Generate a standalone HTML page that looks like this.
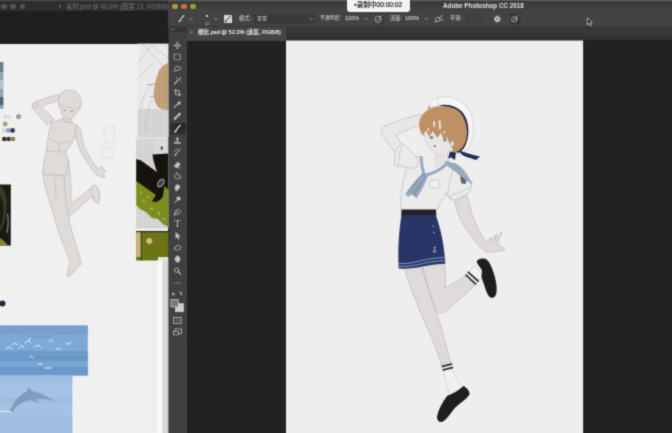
<!DOCTYPE html>
<html lang="zh-CN">
<head>
<meta charset="utf-8">
<title>Adobe Photoshop CC 2018</title>
<style>
html,body{margin:0;padding:0;}
body{width:672px;height:433px;overflow:hidden;position:relative;background:#222222;
  font-family:"Liberation Sans","Noto Sans CJK SC",sans-serif;}
#wrap{position:absolute;left:0;top:0;width:672px;height:433px;overflow:hidden;background:#222222;filter:url(#soft);}
#stage{position:absolute;left:0;top:0;width:672px;height:433px;}
.abs{position:absolute;}
.t{position:absolute;white-space:nowrap;line-height:1;will-change:transform;}
/* left window */
#lw{left:0;top:0;width:168px;height:433px;background:#f0f0f0;overflow:hidden;}
#lw-title{left:0;top:0;width:168px;height:11px;background:linear-gradient(#484848 0,#484848 0.7px,#2f2f2f 0.8px,#2d2d2d 11px);}
#lw-dark{left:0;top:11px;width:168px;height:33px;background:#1f1f1f;}
.dot{position:absolute;width:5px;height:5px;border-radius:50%;}
/* right window */
#rw-title{left:168px;top:0;width:504px;height:11px;background:linear-gradient(#5c5c5c 0,#5c5c5c 0.7px,#3c3c3c 0.8px,#3e3e3e 6px,#424242 11px);}
#rw-opt{left:168px;top:11px;width:504px;height:15px;background:#434343;}
#rw-tabs{left:168px;top:26px;width:504px;height:14px;background:linear-gradient(#393939 0,#363636 9px,#2c2c2c 14px);}
#rw-tab{left:187px;top:26.5px;width:99px;height:14px;background:#454545;}
#tools{left:168.5px;top:26.5px;width:18.5px;height:407px;background:#404040;}
#canvas{left:286px;top:40.5px;width:297px;height:393px;background:#eeeeee;}
#rec{left:347px;top:-3px;width:63px;height:14.5px;background:#f4f4f4;border-radius:3px;}
</style>
</head>
<body>
<svg width="0" height="0" style="position:absolute"><filter id="soft" x="0" y="0" width="100%" height="100%" color-interpolation-filters="sRGB"><feConvolveMatrix order="3" kernelMatrix="1 4 1 4 16 4 1 4 1" divisor="36" edgeMode="duplicate" preserveAlpha="true"/></filter></svg>
<div id="wrap"><div id="stage">
<!-- LEFT WINDOW -->
<div id="lw" class="abs">
  <div id="lw-title" class="abs"></div>
  <div id="lw-dark" class="abs"></div>
  <div class="dot" style="left:1.3px;top:4px;background:#565656;width:5.4px;height:5.4px"></div>
  <div class="dot" style="left:10.3px;top:4px;background:#565656;width:5.4px;height:5.4px"></div>
  <div class="dot" style="left:19.6px;top:4px;background:#565656;width:5.4px;height:5.4px"></div>
  <div class="abs" id="lw-icon" style="left:58.5px;top:4.5px;width:2.5px;height:3.5px;background:#5a5a5a;"></div>
  <div class="t" style="left:66px;top:3.6px;font-size:6.3px;color:#767676;">素材.psd @ 40.6% (图层 13, RGB/8)</div>
</div>

<!-- RIGHT WINDOW -->
<div id="rw-title" class="abs"></div>
<div id="rw-opt" class="abs"></div>
<div id="rw-tabs" class="abs"></div>
<div id="rw-tab" class="abs"></div>
<div id="tools" class="abs"></div>
<div class="abs" style="left:169px;top:26.5px;width:18px;height:5px;background:#353535;"></div>

<div class="dot" style="left:172.3px;top:4px;background:#b8973c;width:5.4px;height:5.4px"></div>
<div class="dot" style="left:181.3px;top:4px;background:#cc6e4c;width:5.4px;height:5.4px"></div>
<div class="dot" style="left:190.3px;top:4px;background:#8aab2e;width:5.4px;height:5.4px"></div>
<div class="t" style="left:443px;top:3px;font-size:6.3px;font-weight:bold;color:#e0e0e0;">Adobe Photoshop CC 2018</div>
<div class="t" style="left:198.3px;top:30.2px;font-size:5.6px;color:#eaeaea;-webkit-text-stroke:0.15px #eaeaea;">细化.psd @ 52.3% (选区, RGB/8)</div>
<div class="t" style="left:190px;top:30px;font-size:5px;color:#b0b0b0;">×</div>


<!-- OPTIONS BAR -->
<div class="abs" style="left:253.5px;top:14px;width:61.5px;height:9.5px;background:#3a3a3a;border-radius:1px;"></div>
<div class="abs" style="left:464.5px;top:14px;width:20px;height:9.5px;background:#404040;border-radius:1px;"></div>
<div class="abs" style="left:373.5px;top:13.5px;width:10px;height:10.5px;background:#383838;border-radius:1px;"></div>
<div class="abs" style="left:509.5px;top:13.5px;width:10.5px;height:10.5px;background:#333333;border-radius:1px;"></div>
<div class="abs" style="left:224px;top:14.5px;width:8px;height:8px;background:#d8d8d8;"></div>
<div class="t" style="left:238.5px;top:16px;font-size:5.3px;color:#dcdcdc;">模式:</div>
<div class="t" style="left:256.6px;top:16.1px;font-size:5.1px;color:#e4e4e4;">正常</div>
<div class="t" style="left:320px;top:16.2px;font-size:4.9px;color:#dcdcdc;">不透明度:</div>
<div class="t" style="left:344.6px;top:16.3px;font-size:5.6px;color:#e4e4e4;">100%</div>
<div class="t" style="left:389.8px;top:16px;font-size:5.3px;color:#dcdcdc;">流量:</div>
<div class="t" style="left:404.8px;top:16.3px;font-size:5.6px;color:#e4e4e4;">100%</div>
<div class="t" style="left:450px;top:16px;font-size:5.3px;color:#dcdcdc;">平滑:</div>
<div class="t" style="left:205px;top:21.5px;font-size:4px;color:#c8c8c8;">12</div>

<div id="rec" class="abs"></div>
<div class="t" style="left:353.8px;top:2.3px;font-size:6.6px;color:#222;-webkit-text-stroke:0.2px #222;"><span style="font-size:4.5px;vertical-align:1px">●</span>录制中00:00:02</div>

<!-- ARTWORK -->
<svg class="abs" style="left:0;top:0" width="672" height="433" viewBox="0 0 672 433" id="art">
<rect x="286" y="40.500" width="297.100" height="393" fill="#eeeeee"/>

<g id="leftart">
  <!-- sea photo (gulls) -->
  <rect x="0" y="325.500" width="87.800" height="50" fill="#7ea8d6"/>
  <rect x="0" y="325.500" width="87.800" height="9" fill="#789fcf"/>
  <rect x="0" y="351" width="87.800" height="10" fill="#6c9bcb"/>
  <rect x="0" y="361" width="87.800" height="6" fill="#79a4d3"/>
  <rect x="0" y="367" width="87.800" height="8.500" fill="#6a98c8"/>
  <path d="M28,337 h22 M60,333 h14 M8,330 h10" stroke="#6c95c4" stroke-width="1.500" fill="none" opacity="0.800"/>
  <path d="M33,357.500 h54" stroke="#56779a" stroke-width="0.800" stroke-dasharray="1.200 1" fill="none"/>
  <g fill="none" stroke="#e8f0fa" stroke-width="1" stroke-linecap="round">
    <path d="M6,349 l3,-2 l3,2"/><path d="M12,345 l2.500,-2 l3,1.500"/><path d="M19,348 l3,-3 l2,3"/>
    <path d="M25,343 l3,-3 l3,2.500"/><path d="M29,340 l1.500,-2.500"/><path d="M35,347 l3,-2 l3,2.500"/>
    <path d="M49,342 l2,-2.500 l2,2"/><path d="M56,350 l2,-2 l3,2"/><path d="M66,343 l3,1.500 l2,-2.500"/>
    <path d="M30,356 l3,1.500"/><path d="M38,364 l4,0"/><path d="M45,368 l6,0"/>
  </g>
  <!-- dolphin photo -->
  <rect x="0" y="375.500" width="72.300" height="58" fill="#a3c2e4"/>
  <rect x="0" y="375.500" width="72.300" height="6" fill="#9bbbe0"/>
  <rect x="0" y="398" width="72.300" height="5" fill="#9ab9dd" opacity="0.700"/>
  <rect x="0" y="415" width="72.300" height="18" fill="#9dbce0" opacity="0.800"/>
  <path d="M10,411 C13,402 20,394 27,391.500 L28.500,386.500 L31.500,391 C38,392 47,396 55,401 C47,399 41,398.500 35,399 L40,404 L31,400 C23,401 16,405 12,413 Z" fill="#7f9cbd"/>
  <path d="M0,412 C4,410.500 8,411 12,412.500" stroke="#e6eef8" stroke-width="1" fill="none"/>
  <!-- navy dot -->
  <circle cx="2.500" cy="303.500" r="3" fill="#262a4a"/>
</g>

<g id="sketch" fill="#dedbd9" stroke="#a9a3a3" stroke-width="0.500" stroke-linejoin="round" stroke-linecap="round">
  <!-- back leg (bent) -->
  <path d="M55,165 L68.500,161 C70.500,175 71.500,192 71,204 L90,189 L95,186 L99,196 L96,202 L91,197 L70,216 C66,220 60,217 58,212 Z"/>
  <!-- back foot -->
  <path d="M91,187 C93,184 97,185 98.500,189 C100,194 100.500,199 98.500,203 C96,204 94,200 92.500,195 Z"/>
  <!-- front leg -->
  <path d="M42.800,172 L64,176 C65,190 66,203 68,215 C71,230 76,246 80,257 L81,264 L74,272 L68.500,277 L67,275.500 L70,261 C65,249 58,232 54,216 C49,200 44,186 42.800,172 Z"/>
  <!-- torso -->
  <path d="M51.600,123 L64,118 L77,125.600 C77,132 74.500,138 72,143 L65.600,152 L68.500,161 L66,176 L42.800,174 C43,166 44.500,158 46.500,151 C47,141 49,131 51.600,123 Z"/>
  <path d="M46.500,151 L65.600,152 M49,139 L60,144 L72,141 M60,144 L58,152 M55,176 L56,200" fill="none" stroke-width="0.400"/>
  <!-- far arm -->
  <path d="M77,125.600 C80,127 81.500,131 81.500,135 C82,141 84,147 87,152 C90,158 94,164 98,169 L102,166 L103,170 L106,170.500 L103.500,174 L105,177 L100,177 L96,174.500 C91,168 86,161 82.500,155 C79,149 76.500,140 75,133 Z"/>
  <!-- raised arm -->
  <path d="M58.500,94.500 C50,96.500 41,99.500 35,102 C32,103.500 31.500,106 33,108.500 C37,114 43,120 47,125 L54.500,119.500 C50,115 45,110 41,106.500 C47,104 54,102 60,100 Z"/>
  <circle cx="35.500" cy="105" r="2.700" stroke-width="0.400"/>
  <!-- neck -->
  <path d="M65,115 L71.500,117 L72,123 L63,121 Z"/>
  <!-- head -->
  <path d="M58.500,103 C57.500,95 62.500,90 69.500,90 C77,90 81.500,96 81,104 C80.500,109 78,112 76,113 C74,117 71,120 68,119.500 C64,118.500 61,114 60.500,109 C59.500,108 58.800,106 58.500,103 Z"/>
  <path d="M58.800,104 C64,107 74,109 80.500,107.500" fill="none" stroke-width="0.400"/>
  <path d="M63.500,110 L66,110.300 M70.500,111 L73.500,111" fill="none" stroke="#7a7575" stroke-width="0.700"/>
  <!-- faint props -->
  <path d="M104,129 L114,126 L115,140 L106,143 Z M102,148 L112,147 L112.500,157 L103,158 Z" fill="none" stroke="#d2d0d0" stroke-width="0.500"/>
</g>
<g id="palette">
  <circle cx="5.500" cy="116.800" r="2.100" fill="#dadada"/>
  <circle cx="9.300" cy="116.800" r="2.100" fill="#dcdcdc"/>
  <circle cx="18.600" cy="116.500" r="2.600" fill="#a3a2a0"/>
  <circle cx="5.200" cy="124" r="2.500" fill="#b39b7c"/>
  <circle cx="4.200" cy="130.500" r="2.300" fill="#d9d9da"/>
  <circle cx="8.400" cy="130.500" r="2.400" fill="#86a3c6"/>
  <circle cx="12.600" cy="130.500" r="2.400" fill="#2c3a5a"/>
  <circle cx="4.300" cy="139" r="2.300" fill="#2b2a2c"/>
  <circle cx="8.600" cy="139" r="2.300" fill="#37322a"/>
  <circle cx="13" cy="139" r="2.300" fill="#8d7d55"/>
</g>
<g id="leftstrip">
  <rect x="0" y="62" width="3.300" height="46.500" fill="#93a1ad"/>
  <rect x="0" y="62" width="3.300" height="10" fill="#6f7d8a"/>
  <rect x="0" y="80" width="3.300" height="9" fill="#b8c0c8"/>
  <rect x="0" y="97" width="3.300" height="8" fill="#55626e"/>
  <rect x="0" y="105" width="3.300" height="3.500" fill="#6fa3d6"/>
</g>

<g id="leftphoto">
  <rect x="0" y="184.500" width="10.800" height="61" fill="#1b1916"/>
  <path d="M0,186 C4,188 7,195 7,205 C7,215 4,225 0,232 Z" fill="#3a3a22"/>
  <path d="M0,196 C3,200 4,208 3,216 C2,222 1,226 0,228 Z" fill="#1d1b18"/>
  <path d="M7.500,214 C8.500,220 8.200,227 7,233" stroke="#8c8c8c" stroke-width="1.100" fill="none"/>
  <path d="M0,238 L4,241 L8,245.500 L0,245.500 Z" fill="#8a8432"/>
</g>

<defs>
  <pattern id="dots1" width="1.600" height="1.600" patternUnits="userSpaceOnUse"><rect width="1.600" height="1.600" fill="#dcdbdd"/><circle cx="0.500" cy="0.500" r="0.400" fill="#bcbbbe"/></pattern>
  <pattern id="dots2" width="1.600" height="1.600" patternUnits="userSpaceOnUse"><rect width="1.600" height="1.600" fill="#b8956a"/><circle cx="0.500" cy="0.500" r="0.400" fill="#d8c4a0"/></pattern>
  <clipPath id="clipL"><rect x="0" y="0" width="168.500" height="433"/></clipPath>
</defs>
<g id="rightimgs" clip-path="url(#clipL)">
  <!-- sketch image -->
  <rect x="137.500" y="43.600" width="31.500" height="94" fill="#e9e8eb"/>
  <rect x="137.500" y="109" width="31.500" height="28.600" fill="url(#dots1)"/>
  <path d="M138,62 L150,47 M143,44 L168,72 M150,44 L168,58 M139,78 L153,63 M141,112 C140,100 146,92 151,86 M146,130 C145,118 148,108 152,100" stroke="#bcbac0" stroke-width="0.600" fill="none"/>
  <path d="M168.500,63 C164,64.500 160.500,67 158.500,72 C156,78 154,86 153.700,93 C153.500,98 155,103 157.500,106.500 C160,109 164,110 168.500,110 Z" fill="url(#dots2)"/>
  <path d="M147,85 L154.500,84 M150,97 L154,96" stroke="#6e6258" stroke-width="0.500" fill="none"/>
  <!-- boot on grass -->
  <rect x="136.200" y="138.500" width="33" height="90" fill="url(#dots1)"/>
  <path d="M136.200,178 L141,175 L146,179 L152,184 L168.500,186 L168.500,227 L163,224 L158,219 L152,218 L146,212 L140,209 L136.200,205 Z" fill="#7e8d1e"/>
  <path d="M142,200 l3,2 M150,208 l3,1 M158,212 l2,3 M147,196 l2,2 M163,218 l2,2 M140,192 l2,1" stroke="#d9dcc0" stroke-width="0.800" fill="none"/>
  <path d="M153,141 L167,140.500 L167.500,155 L153.500,155.500 Z" fill="#dadada"/>
  <path d="M160.500,148 l1.300,-2 l1.300,2 l-1.300,2.500 Z" fill="#3a3a3c"/>
  <path d="M152.500,154.500 L168.500,153.500 L168.500,190 L164.500,186 L163,196 C160,202 155,203 152,201 L156,195 L136.200,181 L136.200,159 L141,160.500 L157,172 C155,166 153,160 152.500,154.500 Z" fill="#16130f"/>
  <ellipse cx="160.800" cy="183" rx="3.200" ry="5" fill="#8c8c8a" transform="rotate(35 160.800 183)"/>
  <ellipse cx="160.800" cy="183" rx="1.800" ry="3.400" fill="#3c3c3a" transform="rotate(35 160.800 183)"/>
  <!-- olive image -->
  <rect x="136.200" y="231" width="33" height="29.500" fill="#6c7418"/>
  <rect x="136.200" y="231" width="4.600" height="26" fill="#c9b478"/>
  <rect x="140.800" y="231" width="0.800" height="29.500" fill="#2c2c10"/>
  <circle cx="149.300" cy="241" r="3" fill="#d9b98a"/>
  <rect x="136.200" y="231" width="33" height="1.200" fill="#2a2a14"/>
  <rect x="158" y="257" width="10.500" height="4" fill="#e4e4e0"/>
  <!-- scroll-ish strips -->
  <rect x="156.800" y="260.500" width="6" height="173" fill="#f8f8f8"/>
  <rect x="162.500" y="260.500" width="6.500" height="173" fill="#d8d5d5"/>
  <path d="M153.300,261 V433 M155.600,261 V433" stroke="#dcdcdc" stroke-width="0.500" stroke-dasharray="1 1" fill="none"/>
  <path d="M164.500,261 V433" stroke="#eceaea" stroke-width="0.600" stroke-dasharray="1 1" fill="none"/>
</g>

<g id="figure" stroke-linejoin="round" stroke-linecap="round">
  <!-- back (bent) leg -->
  <path d="M422,266 L444,263.5 C446,272 446,280 445,288 L466,276 L472,270 L479,281 L470,290 L446,311 C442,314 437,313 435,309 C431,296 426,280 422,266 Z" fill="#dfdbda" stroke="#9a949a" stroke-width="0.4"/>
  <!-- back sock -->
  <path d="M465.5,276 L475,265.5 L483,275.5 L475.5,284 Z" fill="#f1f1f1" stroke="#9a949a" stroke-width="0.3"/>
  <path d="M466,275 L475.500,283.800 M468.400,272.300 L478,281" stroke="#2a2a36" stroke-width="1.700" fill="none"/>
  <!-- back shoe -->
  <path d="M476.600,261.500 C478,259 481,258 484,258.500 C487,259 489.500,262 491.500,267 C494,273 496,280 496.500,286 C497,291 496.500,295 494.500,297 C492.500,298.500 490,298 488,295 C486,291 484.800,287 483.500,283 C482.500,280 481.500,278 481.500,276 C481.800,273 482.500,271.500 481.500,269.500 C480,267 478,265 476.600,261.500 Z" fill="#1d1c1e"/>
  <!-- front leg -->
  <path d="M404.500,268 L421.500,266.500 C425,280 431,296 435,309 C439,320 444,335 446.600,348 L451,363 L441.500,365 C438,353 433.500,342 429.500,333 C423,318 411,292 404.500,268 Z" fill="#dfdbda" stroke="#9a949a" stroke-width="0.4"/>
  <!-- front sock -->
  <path d="M442,364.5 L450.5,362.5 C452,370 456,380 463,387 L449,396 C448,388 445,375 442,364.5 Z" fill="#f1f1f1" stroke="#9a949a" stroke-width="0.3"/>
  <path d="M442.300,366.300 L451.500,364.200 M443.200,369.800 L452.400,367.700" stroke="#2a2a36" stroke-width="1.700" fill="none"/>
  <!-- front shoe -->
  <path d="M463.5,386 C467,388 470,391 469.5,394.5 C466,400 458,404 454,409 C450,414 447,419 443,421.5 C440,423 437,421 437,417 C438,410 442,403 447,396 C452,394 458,391 463.5,386 Z" fill="#1d1c1e"/>
  <!-- far arm (viewer right) -->
  <path d="M454.500,201.500 L466.700,195.400 C469,201 470,206 471,211 C473,217 475.500,223 478,228.300 C481,234 484,239 486.600,243 L491,237 L490.500,241 L497,233.500 L495,240 L502,231.800 L497.500,243 L499,246 L504.800,248.500 L504,250.500 L495.300,251.700 L488.300,252.600 C486,252 484,250.500 482.300,249 C478,245 474,240 471,235.300 C467,230 463,225 460.600,219.700 C458,214 456,208 454.500,201.500 Z" fill="#dfdbda" stroke="#9a949a" stroke-width="0.400"/>
  <!-- raised arm -->
  <path d="M421,114.5 C412,116 398,121 387,125 C382,127 380,130 382,134 C386,141 392,149 397,155 L406,149 C402,144 398,139 396,135 C404,131 414,127 422,124 Z" fill="#e9e7e7" stroke="#9a949a" stroke-width="0.4"/>
  <!-- neck -->
  <path d="M438,150 L447,152 L449,164 L436,166 Z" fill="#dfdbda" stroke="#9a949a" stroke-width="0.3"/>
  <!-- shirt body -->
  <path d="M409,158 C416,154 428,158 436,164 L450,164 C456,164 461,166 465,171 L472,184 L451,200 L446,193 C443,199 439,205 437,210 L401,210 C400,198 402,185 405,174 Z" fill="#ecebec" stroke="#9a949a" stroke-width="0.4"/>
  <!-- left sleeve -->
  <path d="M403,144 L410.500,150.500 C414,154 417,158 418.500,162 L415.500,168.500 L394.600,165.500 C394.300,160 394.600,154 395.500,150 Z" fill="#ecebec" stroke="#9a949a" stroke-width="0.400"/>
  <path d="M401.500,147 C399.500,153 398.500,160 398.300,166" stroke="#b4b0b8" stroke-width="0.600" fill="none"/>
  <!-- right sleeve -->
  <path d="M455,163.500 C462,167 468,176 471.600,186 L468.600,193.500 L452.800,200.500 L447.500,195 C449,184 451,173 455,163.500 Z" fill="#ecebec" stroke="#9a949a" stroke-width="0.400"/>
  <path d="M449.500,196.500 L470,187.500" stroke="#b4b0b8" stroke-width="0.600" fill="none"/>
  <!-- badge -->
  <path d="M460,176.500 L465,175.500 L466.500,180 L465.500,184 L461.500,183.500 Z" fill="#59626f"/>
  <!-- collar -->
  <path d="M423,157 L438,150 L447,152 L446.500,162.500 C441,168 433,172 425.500,174 C424,169 423,163 423,157 Z" fill="#eeedee"/>
  <path d="M433.500,150 L444.500,152 L445,164 C441,167.500 437,169 434,169 Z" fill="#e6e2e1"/>
  <path d="M444.500,160.800 L455,163.500 C462,167 468,176 473,184.500 C467,181.500 461,177 456,172 L447.500,166 Z" fill="#97a3b5"/>
  <path d="M421,156.300 C421.300,164 422.500,170 424.300,175.500 C432,174 441,169.500 447,163.500" stroke="#97a3b5" stroke-width="3" fill="none" stroke-linecap="butt"/>
  <path d="M421,156.300 C421.300,164 422.500,170 424.300,175.500 C432,174 441,169.500 447,163.500 C455,166.500 463,173.500 470,181.500" stroke="#8fb6e2" stroke-width="1" fill="none" stroke-linecap="butt"/>
  <!-- tie -->
  <path d="M422.500,173.500 L427.500,176.500 C425.500,183 421,191 416.500,198 L412,194 L408.500,196.500 L405.500,194.500 C410,187 417,179 422.500,173.500 Z" fill="#8f9aa9" stroke="#7f8ea6" stroke-width="0.300"/>
  <path d="M424,176 C419,183 413,190 407,195.500 M426.500,177.500 C424,184 420,191 416,196.500" stroke="#90bae8" stroke-width="1.200" fill="none"/>
  <!-- pocket -->
  <ellipse cx="434.800" cy="184" rx="5.200" ry="4.600" fill="#f1f0f1" stroke="#a9a5ab" stroke-width="0.500"/>
  <!-- belt -->
  <path d="M401.500,209.500 L435.800,209.500 L436.500,215.500 L401.200,215.500 Z" fill="#222224"/>
  <!-- shorts -->
  <path d="M401.500,215 L435.800,215 C439,224 441,232 442.500,240 C444,249 445,257 445.300,263.700 C437,264 428,265 420,267 C413,268.500 406,268.800 398.600,268.600 C398.200,258 398.200,248 398.800,240 C399.300,231 400.300,223 401.500,215 Z" fill="#283567"/>
  <path d="M398.600,263.500 C406,263.800 412,263 418,261.500 C426,259 436,258 445,257.500 M398.600,266.300 C406,266.600 413,266 419,264.500 C427,262 437,261 445.200,260.600" stroke="#8fa9d6" stroke-width="0.900" fill="none"/>
  <circle cx="433" cy="226" r="0.700" fill="#c8d0e6"/>
  <circle cx="433.800" cy="232.800" r="0.700" fill="#c8d0e6"/>
  <path d="M434.600,248 L434.600,252.300 M432.800,250.800 C433.300,252.800 435.900,252.800 436.400,250.800" stroke="#d8dcec" stroke-width="0.600" fill="none"/>
  <circle cx="434.600" cy="247.600" r="0.700" fill="none" stroke="#d8dcec" stroke-width="0.400"/>
  <!-- face -->
  <path d="M424,131 L453,136 C454,143 451,150 446,154 C441,157 436,155 432,151 C427,146 424,139 424,131 Z" fill="#e9e6e8" stroke="#9a949a" stroke-width="0.3"/>
  <!-- hat top -->
  <path d="M428.500,106 C431,100 437,97 443,96.800 C454,96.500 464,101 469,110 C474,119 475,133 471,143 C468,150 463,153.500 458,153.500 L455,150 C462,146 466,138 466,128 C466,118 460,110 452,107 C446,105 440,105 436,106.500 Z" fill="#f6f6f6" stroke="#aaa8b2" stroke-width="0.400"/>
  <path d="M437.400,98.200 C437.600,101 438,103.500 438.600,105.600" stroke="#aaa8b2" stroke-width="0.400" fill="none"/>
  <!-- hat band -->
  <path d="M439,105.500 C447,103.500 457,106 463,113 C469,121 470,134 466,144 C464,149 461,152 457.500,153 L454,150 C460,146 464,138 464,128 C464,117 457,109 448,107 Z" fill="#1d2140"/>
  <!-- hair -->
  <path d="M419,125 C419,117 425,110 433,107.500 C441,105 451,106 457.500,110 C463,114 466.500,122 467,131 C467.500,140 464,147 459,151 L452,153 C453,149 452,145 449,143 L447,137 L444,141 L441,133 L437,138 L433,131 L429,137 L426,130 L423,136 C421,133 419,129 419,125 Z" fill="#bd9164"/>
  <path d="M433,121.500 L434.800,121 L435.200,126.500 L433.800,127 Z M438.500,120.500 L440.500,120.700 L441,129 L439.300,129.500 Z M427.500,128 L428.800,127.500 L429,131 L427.800,131.500 Z M443.500,131 L444.500,131 L444.800,134 L443.800,134 Z" fill="#efe9e6"/>
  <path d="M426.500,109 L429.500,106.500 L431,108.500 Z" fill="#bd9164"/>
  <!-- ear -->
  <ellipse cx="452.300" cy="143.500" rx="1.600" ry="2.600" fill="#ebe7e5" stroke="#9a949a" stroke-width="0.300"/>
  <!-- eyes, mouth -->
  <ellipse cx="431.500" cy="137.500" rx="1.800" ry="1.700" fill="#8e8c90"/>
  <ellipse cx="445" cy="140" rx="1.900" ry="1.800" fill="#8e8c90"/>
  <ellipse cx="434.800" cy="146" rx="1.300" ry="1" fill="#8a6f78"/>
  <!-- ribbon -->
  <path d="M450,151.500 L456,152.500 L455,160 L451,157.500 L448,158.500 Z" fill="#232a58"/>
  <path d="M458.500,150 C465,153 473,155 480,156.500 L476,160 L470,158 C465,157 461,155 458.500,150 Z" fill="#232a58"/>
</g>

<g id="toolicons" fill="none" stroke="#c6c6c6" stroke-width="0.900" stroke-linecap="round" stroke-linejoin="round">
<path d="M171.500,29.300 h0.800 M173.300,29.300 h0.800" stroke="#9a9a9a" stroke-width="0.800"/>
<rect x="170.500" y="123" width="15.300" height="11.300" fill="#2b2b2b" stroke="none"/>
<g transform="translate(177.3 45.5) scale(0.82)"><!-- move --><path d="M0,-4 v8 M-4,0 h8 M-1.200,-2.800 l1.200,-1.200 l1.200,1.200 M-1.200,2.800 l1.200,1.200 l1.200,-1.200 M-2.800,-1.200 l-1.200,1.200 l1.200,1.200 M2.800,-1.200 l1.200,1.200 l-1.200,1.200" stroke-width="0.900"/></g>
<g transform="translate(177.3 57.0) scale(0.82)"><!-- marquee --><rect x="-3.800" y="-3.300" width="7.600" height="6.600" stroke-dasharray="1.700 1.300" stroke-width="0.800"/></g>
<g transform="translate(177.3 68.7) scale(0.82)"><!-- lasso --><path d="M-3.500,-0.500 C-3.500,-3.200 4,-3.700 4,-0.700 C4,2 -1.500,3 -3,1.500 C-4,2.500 -3,4 -4,4.500" stroke-width="1"/></g>
<g transform="translate(177.3 81.0) scale(0.82)"><!-- wand --><path d="M-3.700,3.800 L2,-2" stroke-width="1.300"/><path d="M3.300,-4.500 v1.800 M2.400,-3.600 h1.800 M-1,-4 v1.200 M4,0 h1.200" stroke-width="0.700"/></g>
<g transform="translate(177.3 92.5) scale(0.82)"><!-- crop --><path d="M-2,-4.200 v7 h6.500 M-4,-2.200 h6.500 v6.200" stroke-width="1"/></g>
<g transform="translate(177.3 104.5) scale(0.82)"><!-- eyedropper --><path d="M-3.500,3.500 L1.300,-1.300" stroke-width="1.400"/><path d="M0.800,-2.700 L3.300,-0.200" stroke-width="1.300"/><circle cx="3" cy="-2.800" r="1.200" fill="#c6c6c6" stroke="none"/></g>
<g transform="translate(177.3 116.3) scale(0.82)"><!-- heal --><path d="M-3,3 L3,-3" stroke-width="2.800"/><path d="M-1,1 L1,-1" stroke="#404040" stroke-width="0.800"/></g>
<g transform="translate(177.3 128.6) scale(0.82)"><!-- brush --><path d="M-1,1 L3.800,-4.200" stroke="#f2f2f2" stroke-width="1.300"/><path d="M-3.500,4.500 C-3,2.500 -2,1.500 -0.700,1.700 C-0.500,3 -1.500,4.300 -3.500,4.500 Z" fill="#f2f2f2" stroke="#f2f2f2" stroke-width="0.500"/></g>
<g transform="translate(177.3 140.3) scale(0.82)"><!-- stamp --><path d="M-3.700,3.700 h7.500 M-3.200,2.200 h6.500 M0,1.700 v-2" stroke-width="1.100"/><circle cx="0" cy="-1.800" r="1.600" fill="#c6c6c6" stroke="none"/></g>
<g transform="translate(177.3 152.2) scale(0.82)"><!-- histbrush --><path d="M-1,1.300 L3.500,-3.700" stroke-width="1.200"/><path d="M-3.500,4.300 C-3,2.600 -2,1.800 -0.700,2 C-0.500,3.100 -1.500,4.300 -3.500,4.300 Z" fill="#c6c6c6" stroke-width="0.400"/><path d="M-3.500,-0.700 C-3.500,-3.200 -1,-4.400 0.800,-3.400" stroke-width="0.800"/></g>
<g transform="translate(177.3 164.4) scale(0.82)"><!-- eraser --><path d="M-3.700,2 L0.300,-3 L3.800,-0.500 L0.100,4 Z" fill="#c6c6c6" stroke-width="0.500"/><path d="M-3.700,2 L0.100,4 h3.500" stroke-width="0.800"/></g>
<g transform="translate(177.3 176.0) scale(0.82)"><!-- bucket --><path d="M-3.300,0 L0.200,-3.500 L3.700,0.500 L0.200,4 Z" stroke-width="1"/><path d="M4.200,1.500 C4.700,2.500 5,3.300 4.200,4" stroke-width="0.900"/><path d="M-1.300,-4.500 L0.700,-2" stroke-width="0.800"/></g>
<g transform="translate(177.3 187.5) scale(0.82)"><!-- smudge --><path d="M-2,4 C-3.500,0.500 -2.500,-3.500 0,-3.500 C3,-3.500 4,-1 2.500,1 C1.500,2 0.500,2.500 0,4 Z" fill="#c6c6c6" stroke-width="0.500"/></g>
<g transform="translate(177.3 199.8) scale(0.82)"><!-- dodge --><circle cx="1.500" cy="-1.500" r="2.500" fill="#c6c6c6" stroke="none"/><path d="M0,0.300 L-3.200,3.800" stroke-width="1.200"/></g>
<g transform="translate(177.3 211.8) scale(0.82)"><!-- pen --><path d="M-3.800,3.700 L-1.800,-1.800 L1.700,-3.300 L4.200,-0.800 L2.200,2.200 Z" stroke-width="0.900"/><path d="M-3.800,3.700 L-0.300,0.200" stroke-width="0.700"/><circle cx="0.200" cy="0" r="0.800" fill="#c6c6c6" stroke="none"/></g>
<g transform="translate(177.3 235.7) scale(0.82)"><!-- pathsel --><path d="M-2,-4.300 L-2,3.500 L0,1.700 L1.400,4.500 L2.500,4 L1.200,1.200 L3.500,1 Z" fill="#c6c6c6" stroke-width="0.300"/></g>
<g transform="translate(177.3 247.5) scale(0.82)"><!-- shape --><path d="M-3.300,2 C-4.300,0 -2.800,-1 -1.500,-0.500 C-1.300,-3 1.200,-3.500 2,-1.700 C3.700,-2.500 5,-0.500 3.500,0.800 C4.200,2.500 2.200,3.500 1,2.500 C0.200,3.800 -2.300,3.500 -3.300,2 Z" stroke-width="0.900"/></g>
<g transform="translate(177.3 259.4) scale(0.82)"><!-- hand --><path d="M-2.500,1 C-3.300,-0.500 -3.800,-1.700 -2.800,-2 L-1.800,-1 L-1.800,-3.500 C-1.800,-4.500 -0.600,-4.500 -0.500,-3.500 L-0.300,-4.200 C0,-5 1,-4.800 1,-3.800 L1.200,-3.500 C1.700,-4.200 2.500,-3.800 2.500,-2.900 L2.700,-2 C3.400,-2.500 3.800,-1.700 3.600,-0.700 C3.400,1 2.900,2.500 2,3.500 L-1,3.500 C-1.600,2.700 -2.100,1.800 -2.500,1 Z" fill="#c6c6c6" stroke-width="0.300"/></g>
<g transform="translate(177.3 271.0) scale(0.82)"><!-- zoom --><circle cx="-0.800" cy="-1" r="2.700" stroke-width="1"/><path d="M1.200,1 L4,3.800" stroke-width="1.300"/></g>
<g transform="translate(177.3 283.0) scale(0.82)"><!-- more --><path d="M-3,0 h0.100 M0,0 h0.100 M3,0 h0.100" stroke-width="1.400"/></g>
</g>
<text x="177.300" y="227" font-family="Liberation Serif, serif" font-size="9.500" text-anchor="middle" fill="#c6c6c6">T</text>
<path d="M184.400,49.5 l1,0 l0,-1 Z M184.400,61.5 l1,0 l0,-1 Z M184.400,73.0 l1,0 l0,-1 Z M184.400,85.5 l1,0 l0,-1 Z M184.400,97.0 l1,0 l0,-1 Z M184.400,109.0 l1,0 l0,-1 Z M184.400,120.5 l1,0 l0,-1 Z M184.400,133.0 l1,0 l0,-1 Z M184.400,144.5 l1,0 l0,-1 Z M184.400,156.5 l1,0 l0,-1 Z M184.400,168.5 l1,0 l0,-1 Z M184.400,180.5 l1,0 l0,-1 Z M184.400,192.0 l1,0 l0,-1 Z M184.400,204.0 l1,0 l0,-1 Z M184.400,216.0 l1,0 l0,-1 Z M184.400,228.0 l1,0 l0,-1 Z M184.400,240.0 l1,0 l0,-1 Z M184.400,252.0 l1,0 l0,-1 Z M184.400,264.0 l1,0 l0,-1 Z M184.400,287.5 l1,0 l0,-1 Z M184.400,337.0 l1,0 l0,-1 Z" fill="#a0a0a0"/>
<g id="toolbottom">
  <circle cx="173.500" cy="294.300" r="1.400" fill="#dcdcdc"/>
  <path d="M172.700,295.300 a1.400,1.400 0 0 0 2,-1.700 Z" fill="#222"/>
  <path d="M179.500,292.500 h2 v2.500 M180.300,291.700 l-0.900,0.800 l0.900,0.800 M180.700,294.200 l0.800,0.900 l0.800,-0.900" fill="none" stroke="#d2d2d2" stroke-width="0.600"/>
  <rect x="175.300" y="303.600" width="8.200" height="8.200" fill="#cdcdcd" stroke="#e2e2e2" stroke-width="0.500"/>
  <rect x="170.900" y="299.400" width="7.400" height="7.600" fill="#7b7b7b" stroke="#d8d8d8" stroke-width="0.600"/>
  <rect x="173.500" y="317.500" width="7.600" height="6" fill="none" stroke="#d2d2d2" stroke-width="0.700"/>
  <circle cx="177.300" cy="320.500" r="1.600" fill="none" stroke="#d2d2d2" stroke-width="0.600" stroke-dasharray="0.800 0.600"/>
  <rect x="175" y="329" width="6.500" height="4.500" fill="none" stroke="#d2d2d2" stroke-width="0.700"/>
  <rect x="173.300" y="331.300" width="5" height="3.600" fill="#404040" stroke="#d2d2d2" stroke-width="0.600"/>
</g>

<g id="opticons" fill="none" stroke="#d2d2d2" stroke-width="0.800" stroke-linecap="round" stroke-linejoin="round">
  <!-- brush tool icon -->
  <path d="M180.800,19 L183.800,15.600" stroke="#ececec" stroke-width="1.100"/>
  <path d="M178.800,21.800 C179.100,20.400 179.900,19.600 181,19.700 C181.100,20.700 180.300,21.700 178.800,21.800 Z" fill="#ececec" stroke="#ececec" stroke-width="0.400"/>
  <!-- chevrons -->
  <path d="M189.800,18.300 l1.300,1.300 l1.300,-1.300 M214.800,18.300 l1.300,1.300 l1.300,-1.300 M310.300,18.300 l1.300,1.300 l1.300,-1.300 M364.800,18.300 l1.300,1.300 l1.300,-1.300 M425,18.300 l1.300,1.300 l1.300,-1.300" stroke="#b8b8b8" stroke-width="0.700"/>
  <!-- brush preview dot -->
  <circle cx="207" cy="16" r="1.100" fill="#f0f0f0" stroke="none"/>
  <!-- brush panel toggle (white square w/ brush) -->
  <path d="M226,21 L230.500,16" stroke="#333" stroke-width="1"/>
  <path d="M225,22 l1.600,-0.400 l-1.100,-1.100 Z" fill="#333" stroke="#333" stroke-width="0.300"/>
  <!-- pressure opacity icon -->
  <circle cx="378" cy="19.300" r="3.200" stroke-width="0.700"/>
  <path d="M377,20.500 L382,15.300" stroke-width="0.900"/>
  <!-- airbrush icon -->
  <path d="M435.500,20 C435.500,17.500 438,16.500 439.500,18 C440.500,19.500 439.500,21.500 437.500,21.500 L435,21.500" stroke-width="0.800"/>
  <path d="M439.500,18 L442.500,15.300 M441,19.500 l1.800,0.300" stroke-width="0.800"/>
  <!-- gear -->
  <circle cx="497.300" cy="19" r="1.900" stroke="#dedede" stroke-width="1.300"/>
  <path d="M497.300,15.900 v6.200 M494.200,19 h6.200 M495.100,16.800 l4.400,4.400 M499.500,16.800 l-4.400,4.400" stroke="#dedede" stroke-width="0.900"/>
  <circle cx="497.300" cy="19" r="1" fill="#434343" stroke="none"/>
  <path d="M501.200,22.500 l1,0 l0,-1 Z" fill="#a0a0a0" stroke="none"/>
  <!-- symmetry / pressure size icon -->
  <circle cx="514.300" cy="19.500" r="2.800" stroke-width="0.700"/>
  <path d="M513.500,20.500 L518,15.500" stroke-width="0.900"/>
</g>
<!-- mouse cursor -->
<path d="M587.300,17.800 L587.300,24.600 L588.900,23.200 L590,25.800 L591.200,25.300 L590.100,22.800 L592.200,22.600 Z" fill="#151515" stroke="#e8e8e8" stroke-width="0.700" stroke-linejoin="round"/>

</svg>
</div></div>
</body>
</html>
